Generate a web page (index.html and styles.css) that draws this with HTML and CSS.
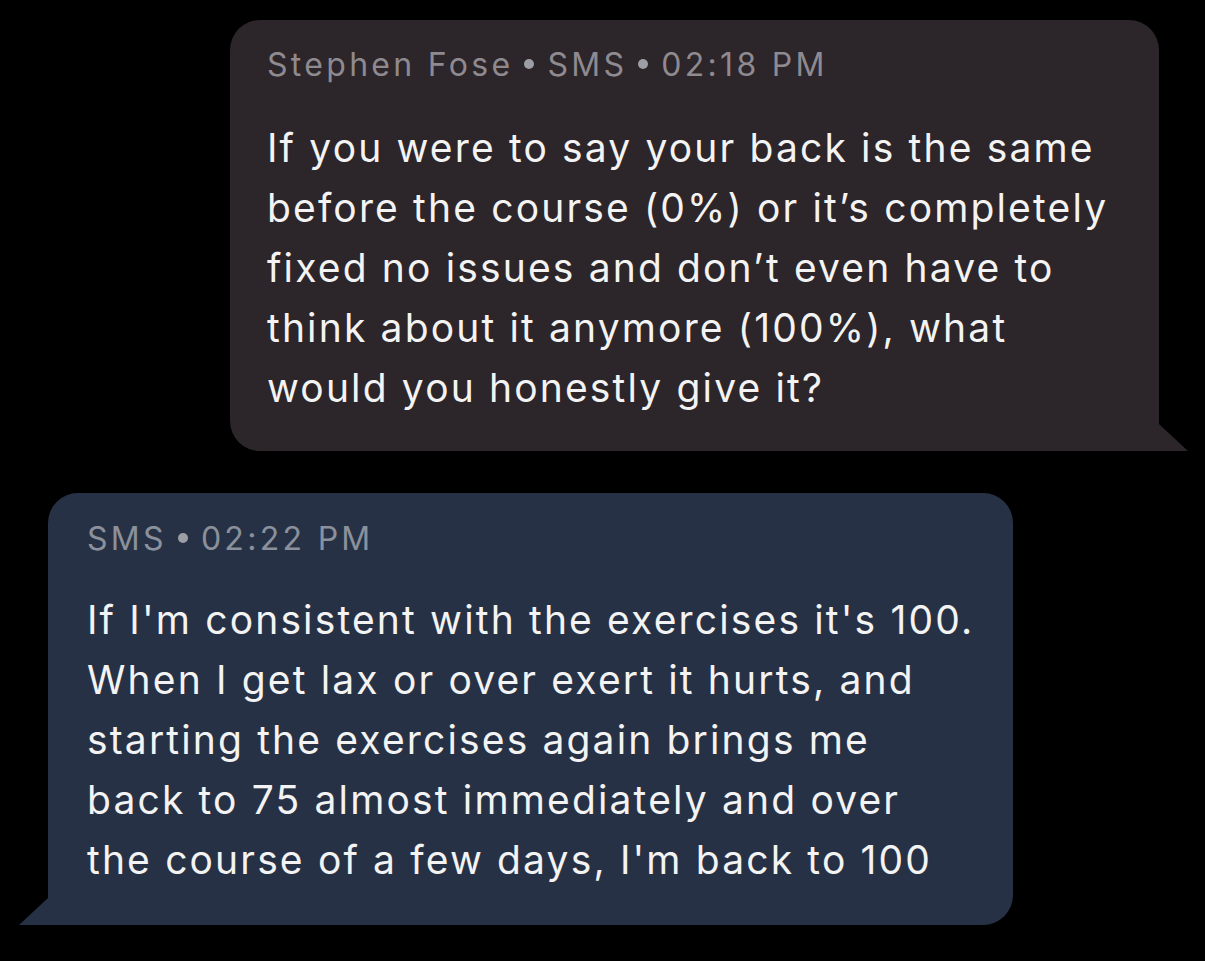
FILE: index.html
```html
<!DOCTYPE html>
<html>
<head>
<meta charset="utf-8">
<link rel="stylesheet" href="styles.css">
</head>
<body>
<div class="thread">
  <div class="bubble out">
    <div class="meta">Stephen Fose<span class="dot"></span>SMS<span class="dot"></span>02:18 PM</div>
    <div class="text">If you were to say your back is the same<br>before the course (0%) or it’s completely<br>fixed no issues and don’t even have to<br>think about it anymore (100%), what<br>would you honestly give it?</div>
  </div>
  <div class="bubble in">
    <div class="meta">SMS<span class="dot"></span>02:22 PM</div>
    <div class="text">If I'm consistent with the exercises it's 100.<br>When I get lax or over exert it hurts, and<br>starting the exercises again brings me<br>back to 75 almost immediately and over<br>the course of a few days, I'm back to 100</div>
  </div>
</div>
</body>
</html>
```

FILE: styles.css
```css
html, body {
  margin: 0;
  padding: 0;
  background: #000;
  height: 100%;
}
body {
  font-family: Inter, "Noto Sans", sans-serif;
  width: 1205px;
  height: 961px;
  overflow: hidden;
}
.thread {
  display: flex;
  flex-direction: column;
  gap: 42px;
  padding-top: 20px;
}
.bubble {
  position: relative;
  box-sizing: border-box;
  border-radius: 30px;
}
.bubble.out {
  margin-left: 230px;
  width: 929px;
  background: #2c2529;
  padding: 25px 20px 33px 37px;
  border-bottom-right-radius: 0;
}
.bubble.in {
  margin-left: 48px;
  width: 965px;
  background: #273145;
  padding: 26px 20px 35px 39px;
  border-bottom-left-radius: 0;
}
.bubble.out::after {
  content: "";
  position: absolute;
  right: -29px;
  bottom: 0;
  width: 29px;
  height: 27px;
  background: #2c2529;
  clip-path: polygon(0 0, 100% 100%, 0 100%);
}
.bubble.in::after {
  content: "";
  position: absolute;
  left: -29px;
  bottom: 0;
  width: 29px;
  height: 27px;
  background: #273145;
  clip-path: polygon(100% 0, 100% 100%, 0 100%);
}
.meta {
  font-size: 32px;
  line-height: 40px;
  letter-spacing: 3.3px;
  color: #8e8a90;
  white-space: nowrap;
}
.bubble.in .meta {
  color: #8b919c;
}
.dot {
  display: inline-block;
  width: 10px;
  height: 10px;
  border-radius: 50%;
  background: #9c9ea5;
  margin: 0 13px 0 11px;
  vertical-align: 7px;
}
.text {
  margin-top: 33px;
  font-size: 39px;
  line-height: 60px;
  letter-spacing: 2.15px;
  color: #f3f3f3;
  white-space: nowrap;
}
.bubble.in .text {
  margin-top: 31px;
}
```
